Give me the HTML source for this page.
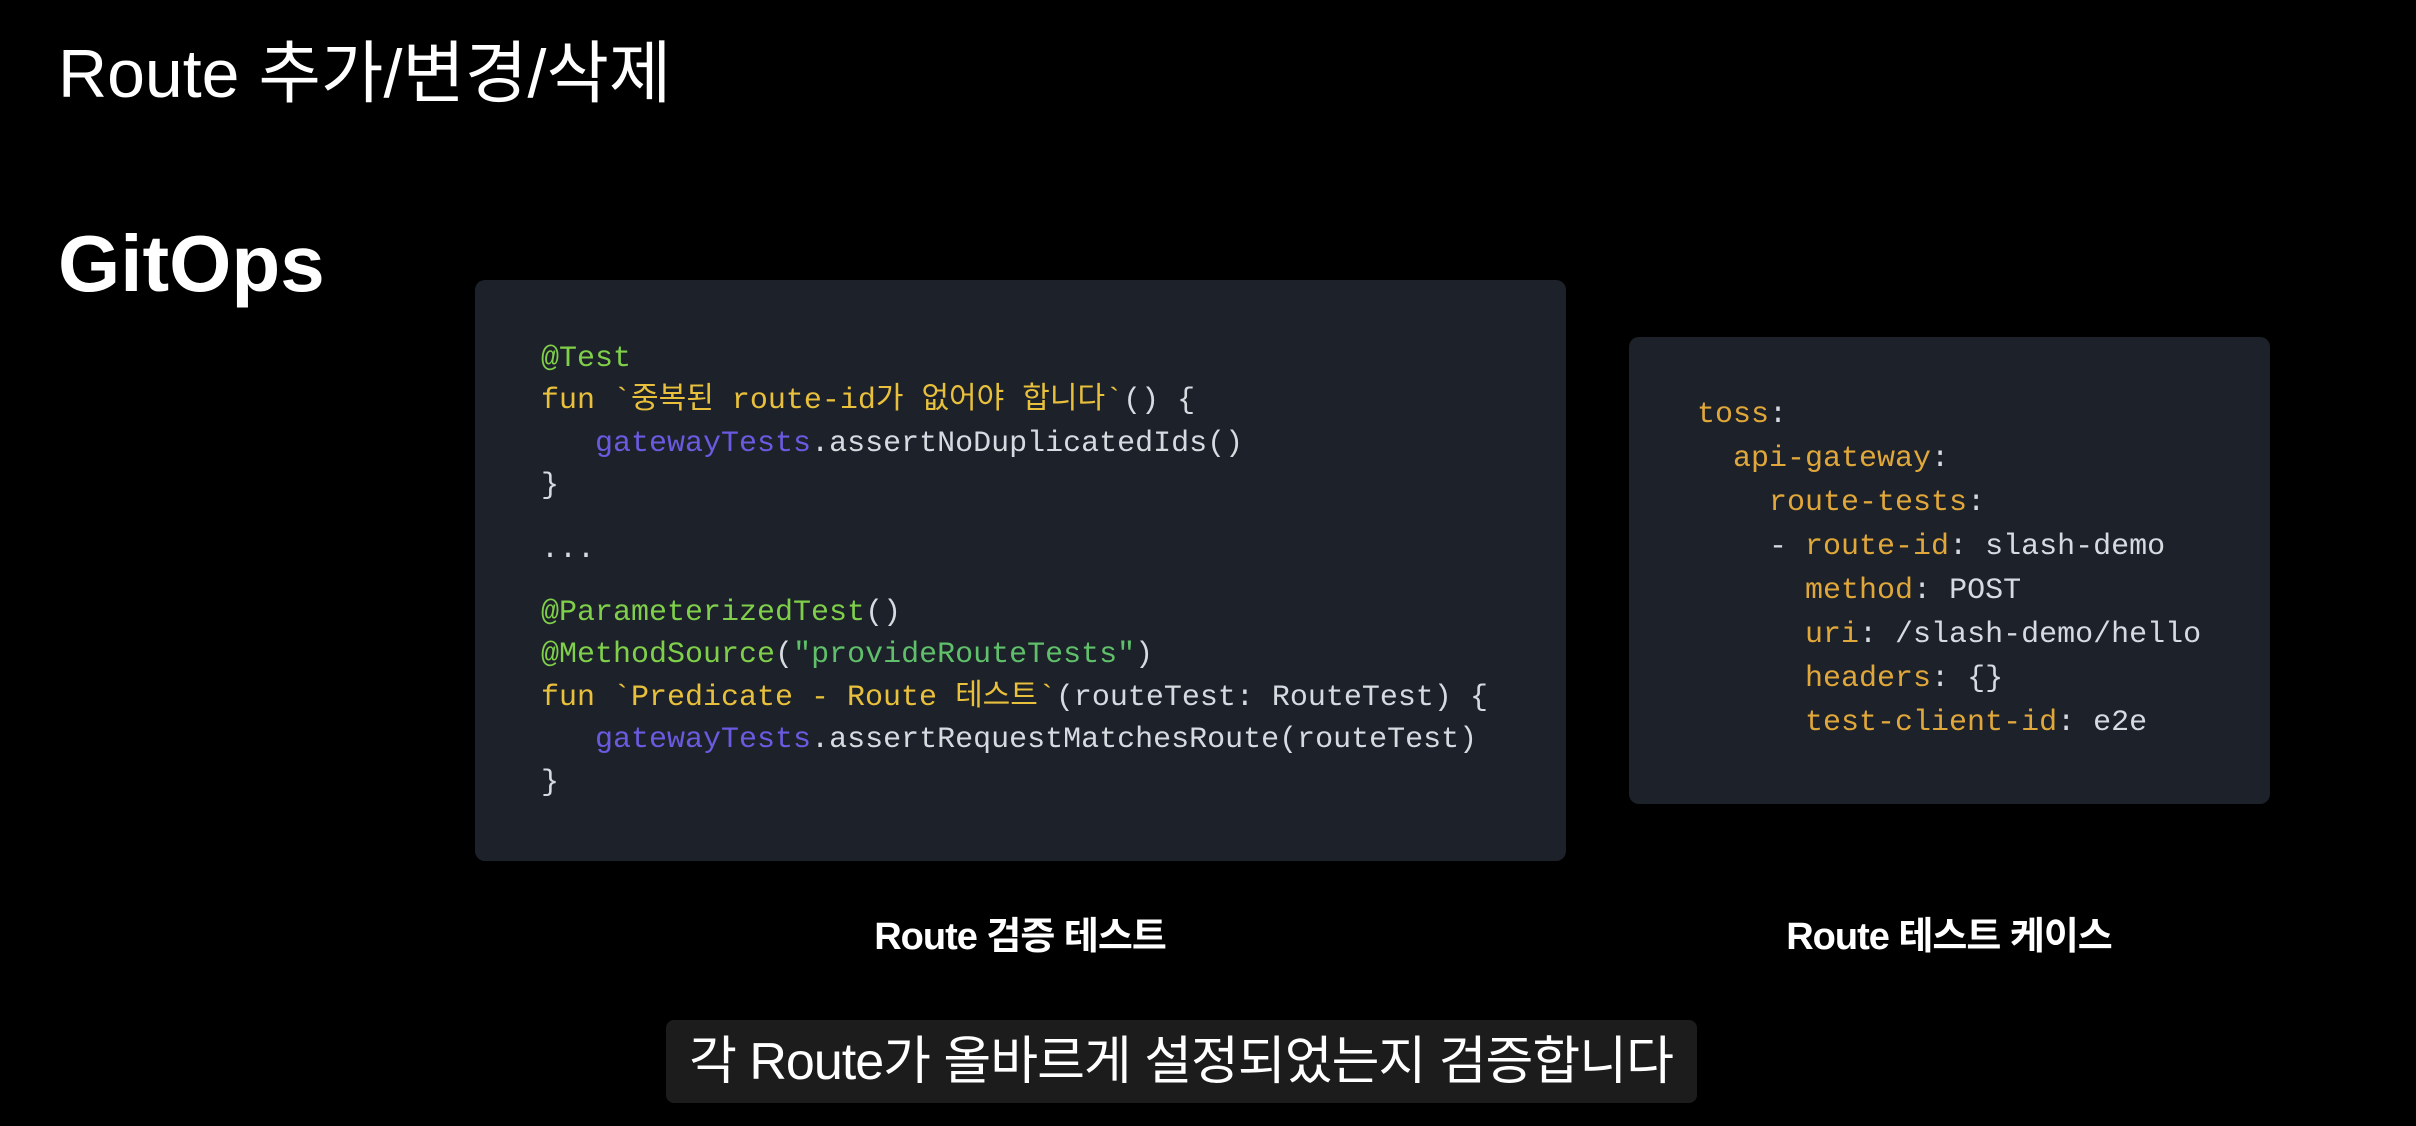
<!DOCTYPE html>
<html><head><meta charset="utf-8"><style>
body{margin:0;width:2416px;height:1126px;background:#000;overflow:hidden;position:relative;font-family:"Liberation Sans","Noto Sans CJK KR",sans-serif;color:#fff}
.a{position:absolute;white-space:pre}
.box{position:absolute;background:#1d2129;border-radius:10px}
.code{position:absolute;font-family:"Liberation Mono","Noto Sans CJK KR",monospace;white-space:pre;color:#d6dbe1}
.code div{height:42.4px;line-height:42.4px;overflow:visible}
.code div.b{height:21px}
.g{color:#7fcf4a}.y{color:#e8c03c}.p{color:#6a5ae0}.s{color:#5fbf6a}.o{color:#e0a73a}
</style></head><body>
<div class="a" style="left:58px;top:18px;font-size:68px">Route 추가/변경/삭제</div>
<div class="a" style="left:58px;top:218px;font-size:80px;font-weight:bold">GitOps</div>

<div class="box" style="left:475px;top:280px;width:1091px;height:581px"></div>
<div class="code" style="left:541px;top:338px;font-size:30px"><div><span class="g">@Test</span></div><div><span class="y">fun `중복된 route-id가 없어야 합니다`</span>() {</div><div>   <span class="p">gatewayTests</span>.assertNoDuplicatedIds()</div><div>}</div><div class="b"></div><div>...</div><div class="b"></div><div><span class="g">@ParameterizedTest</span>()</div><div><span class="g">@MethodSource</span>(<span class="s">"provideRouteTests"</span>)</div><div><span class="y">fun `Predicate - Route 테스트`</span>(routeTest: RouteTest) {</div><div>   <span class="p">gatewayTests</span>.assertRequestMatchesRoute(routeTest)</div><div>}</div></div>

<div class="box" style="left:1629px;top:337px;width:641px;height:467px"></div>
<div class="code" style="left:1697px;top:393px;font-size:30px;line-height:44px"><span class="o">toss</span>:
  <span class="o">api-gateway</span>:
    <span class="o">route-tests</span>:
    - <span class="o">route-id</span>: slash-demo
      <span class="o">method</span>: POST
      <span class="o">uri</span>: /slash-demo/hello
      <span class="o">headers</span>: {}
      <span class="o">test-client-id</span>: e2e</div>

<div class="a" style="left:1020px;top:905px;transform:translateX(-50%);font-size:38px;font-weight:bold;letter-spacing:-1px">Route 검증 테스트</div>
<div class="a" style="left:1949px;top:905px;transform:translateX(-50%);font-size:38px;font-weight:bold;letter-spacing:-1px">Route 테스트 케이스</div>

<div class="box" style="left:666px;top:1020px;width:1031px;height:83px;background:#1c1c1c;border-radius:8px"></div>
<div class="a" style="left:1181px;top:1031px;transform:translateX(-50%);font-size:52px;line-height:62px;letter-spacing:-1px">각 Route가 올바르게 설정되었는지 검증합니다</div>
</body></html>
